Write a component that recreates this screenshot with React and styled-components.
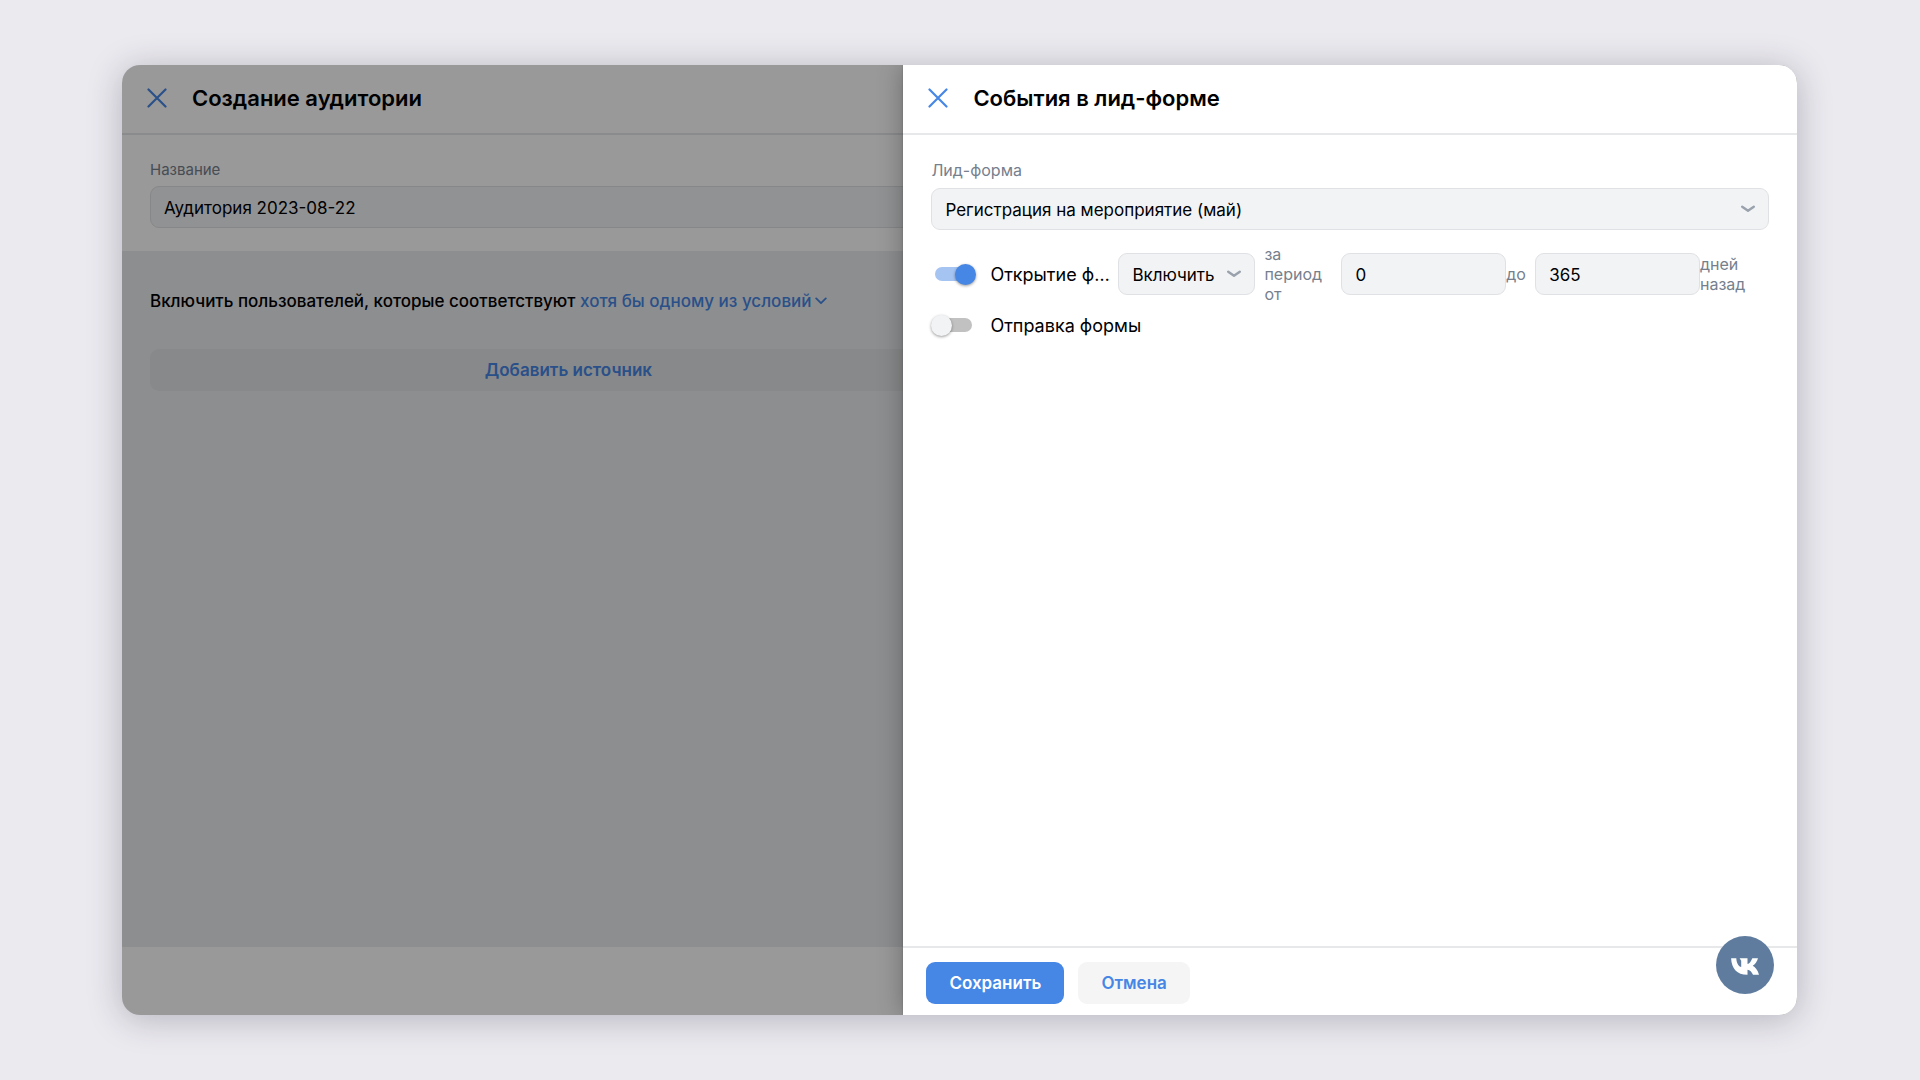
import { useState } from "react";
import styled, { createGlobalStyle } from "styled-components";

const FORMS = ["Регистрация на мероприятие (май)"];
const MODES = ["Включить", "Исключить"];

const CloseIcon = () => (
  <svg width="20" height="20" viewBox="0 0 20 20" fill="none">
    <path
      d="M1.5 1.5 18.5 18.5M18.5 1.5 1.5 18.5"
      stroke="currentColor"
      strokeWidth="2.2"
      strokeLinecap="round"
    />
  </svg>
);

const ChevronIcon = () => (
  <svg width="14" height="8" viewBox="0 0 14 8" fill="none">
    <path
      d="M1.2 1.7 7 5.8l5.8-4.1"
      stroke="currentColor"
      strokeWidth="2.4"
      strokeLinecap="round"
      strokeLinejoin="round"
    />
  </svg>
);

const SmallChevronIcon = () => (
  <svg width="12" height="8" viewBox="0 0 12 8" fill="none">
    <path
      d="M1.2 1.4 6 6.2l4.8-4.8"
      stroke="currentColor"
      strokeWidth="1.8"
      strokeLinecap="round"
      strokeLinejoin="round"
    />
  </svg>
);

const VkIcon = () => (
  <svg width="28" height="17" viewBox="0 0 28 17" fill="#ffffff">
    <path d="M16.200 16.800C6 16.800.6 10.500.1.200h5.200c.3 5.600 2.600 8.200 4.900 8.900V2.800L8.600.200h7.900v5.900C18.400 5.600 20.200 3.200 21.300.200h5.700c-.8 3.200-3 6-5.300 7.600 2.400 1.300 5.200 4.400 6.300 9h-6c-1.100-2.900-3.100-4.700-5.500-5.100v5.100z" />
  </svg>
);

const SelectField = ({ options, ...props }) => (
  <SelectBox>
    <Select {...props}>
      {options.map((option) => (
        <option key={option}>{option}</option>
      ))}
    </Select>
    <ChevronIcon />
  </SelectBox>
);

export default function App() {
  const [name, setName] = useState("Аудитория 2023-08-22");
  const [opened, setOpened] = useState(true);
  const [sent, setSent] = useState(false);
  const [from, setFrom] = useState("0");
  const [to, setTo] = useState("365");

  return (
    <Page>
      <GlobalStyle />
      <Window>
        <Panel>
          <Header>
            <CloseBtn aria-label="Закрыть">
              <CloseIcon />
            </CloseBtn>
            <Title>Создание аудитории</Title>
          </Header>
          <NameSection>
            <Label className="small" htmlFor="name">
              Название
            </Label>
            <Input
              id="name"
              value={name}
              onChange={(e) => setName(e.currentTarget.value)}
            />
          </NameSection>
          <SourceSection>
            <Condition>
              Включить пользователей, которые соответствуют{" "}
              <ConditionBtn>
                хотя бы одному из условий
                <SmallChevronIcon />
              </ConditionBtn>
            </Condition>
            <AddBtn>Добавить источник</AddBtn>
          </SourceSection>
          <PanelFooter />
        </Panel>
        <Overlay />
        <Drawer>
          <Header>
            <CloseBtn aria-label="Закрыть">
              <CloseIcon />
            </CloseBtn>
            <Title>События в лид-форме</Title>
          </Header>
          <Content>
            <FormField>
              <Label htmlFor="form">Лид-форма</Label>
              <SelectField id="form" options={FORMS} />
            </FormField>
            <EventRow>
              <Switch
                type="checkbox"
                id="opened"
                checked={opened}
                onChange={(e) => setOpened(e.currentTarget.checked)}
              />
              <EventName className="short" htmlFor="opened">
                Открытие формы
              </EventName>
              {opened && (
                <>
                  <ModeField>
                    <SelectField aria-label="Условие" options={MODES} />
                  </ModeField>
                  <Hint className="period" htmlFor="from">
                    за период от
                  </Hint>
                  <Days
                    id="from"
                    value={from}
                    onChange={(e) => setFrom(e.currentTarget.value)}
                  />
                  <Hint className="to" htmlFor="to">
                    до
                  </Hint>
                  <Days
                    id="to"
                    value={to}
                    onChange={(e) => setTo(e.currentTarget.value)}
                  />
                  <Hint className="ago" htmlFor="to">
                    дней назад
                  </Hint>
                </>
              )}
            </EventRow>
            <EventRow>
              <Switch
                type="checkbox"
                id="sent"
                checked={sent}
                onChange={(e) => setSent(e.currentTarget.checked)}
              />
              <EventName htmlFor="sent">Отправка формы</EventName>
            </EventRow>
          </Content>
          <Footer>
            <Btn className="primary">Сохранить</Btn>
            <Btn>Отмена</Btn>
          </Footer>
        </Drawer>
        <VkBtn aria-label="VK">
          <VkIcon />
        </VkBtn>
      </Window>
    </Page>
  );
}

const GlobalStyle = createGlobalStyle`
  * {
    box-sizing: border-box;
  }
  body {
    margin: 0;
    background-color: #ebeaef;
    color: #000000;
    font-family: Inter, "Noto Sans", sans-serif;
    font-size: 17px;
  }
  button, input, select {
    font: inherit;
    color: inherit;
  }
  button {
    padding: 0;
    border: none;
    background: none;
    cursor: pointer;
  }
`;

const Page = styled.div`
  display: flex;
  min-height: 100vh;
  padding: 65px 123px 65px 122px;
`;

const Window = styled.div`
  position: relative;
  display: flex;
  flex: 1;
  border-radius: 18px;
  overflow: hidden;
  background-color: #ffffff;
  box-shadow: 0 4px 34px rgba(40, 36, 60, 0.28);
`;

const Panel = styled.section`
  display: flex;
  flex-direction: column;
  width: 53.3%;
`;

const Overlay = styled.div`
  position: absolute;
  inset: 0;
  background-color: rgba(0, 0, 0, 0.4);
`;

const Drawer = styled.section`
  position: absolute;
  top: 0;
  right: 0;
  bottom: 0;
  display: flex;
  flex-direction: column;
  width: 53.35%;
  background-color: #ffffff;
  box-shadow: 0 0 24px rgba(0, 0, 0, 0.3), 0 0 2px rgba(0, 0, 0, 0.2);
`;

const Header = styled.header`
  display: flex;
  align-items: center;
  gap: 25px;
  height: 70px;
  padding: 0 25px 2px;
  border-bottom: 2px solid #e7e8ea;
`;

const CloseBtn = styled.button`
  display: flex;
  color: #4686e4;
`;

const Title = styled.h1`
  margin: 0;
  font-size: 22px;
  font-weight: 600;
`;

const NameSection = styled.div`
  display: flex;
  flex-direction: column;
  gap: 6px;
  padding: 25px 28px 23px;
`;

const Label = styled.label`
  font-size: 16px;
  line-height: 20px;
  color: #76808d;
  &.small {
    font-size: 15px;
  }
`;

const Input = styled.input`
  width: 100%;
  height: 42px;
  padding: 2px 13px 0;
  border: 1px solid #e0e1e4;
  border-radius: 9px;
  outline: none;
  background-color: #f2f3f5;
`;

const SourceSection = styled.div`
  display: flex;
  flex: 1;
  flex-direction: column;
  gap: 36px;
  padding: 38px 28px;
  background-color: #ebedf0;
`;

const Condition = styled.div`
  line-height: 24px;
  font-weight: 500;
`;

const ConditionBtn = styled.button`
  display: inline-flex;
  align-items: center;
  gap: 3px;
  color: #4686e4;
`;

const AddBtn = styled.button`
  height: 42px;
  border-radius: 9px;
  background-color: #e3e4e6;
  color: #4686e4;
  font-weight: 600;
`;

const PanelFooter = styled.footer`
  height: 68px;
`;

const Content = styled.div`
  flex: 1;
  padding: 25px 28px;
`;

const FormField = styled.div`
  display: flex;
  flex-direction: column;
  gap: 8px;
  margin-bottom: 14px;
`;

const SelectBox = styled.div`
  display: grid;
  align-items: center;
  color: #99a2ad;
  & > * {
    grid-area: 1 / 1;
  }
  & > svg {
    justify-self: end;
    margin-right: 14px;
    pointer-events: none;
  }
`;

const Select = styled.select`
  appearance: none;
  width: 100%;
  height: 42px;
  padding: 2px 36px 0 13px;
  border: 1px solid #e0e1e4;
  border-radius: 9px;
  outline: none;
  background-color: #f2f3f5;
  color: #000000;
`;

const EventRow = styled.div`
  display: flex;
  align-items: center;
  min-height: 42px;
`;

const Switch = styled.input`
  appearance: none;
  display: grid;
  align-items: center;
  flex: none;
  width: 45px;
  height: 22px;
  margin: 0 14px 0 0;
  cursor: pointer;
  &::before,
  &::after {
    content: "";
    grid-area: 1 / 1;
  }
  &::before {
    height: 14px;
    margin: 0 4px;
    border-radius: 7px;
    background-color: #c1c1c1;
  }
  &::after {
    width: 21px;
    height: 21px;
    border-radius: 50%;
    background-color: #f2f3f5;
    box-shadow: 0 1px 3px rgba(0, 0, 0, 0.4);
  }
  &:checked::before {
    background-color: #a5c4f2;
  }
  &:checked::after {
    justify-self: end;
    background-color: #4686e4;
  }
`;

const EventName = styled.label`
  overflow: hidden;
  padding-top: 2px;
  white-space: nowrap;
  text-overflow: ellipsis;
  font-size: 18px;
  line-height: 24px;
  &.short {
    flex: none;
    width: 122px;
    margin-right: 6px;
  }
`;

const ModeField = styled.div`
  flex: none;
  width: 137px;
`;

const Hint = styled.label`
  flex: none;
  font-size: 16px;
  line-height: 20px;
  color: #76808d;
  &.period {
    width: 77px;
    margin-left: 9px;
  }
  &.to {
    width: 29px;
  }
  &.ago {
    width: 69px;
  }
`;

const Days = styled(Input)`
  flex: 1;
  min-width: 0;
`;

const Footer = styled.footer`
  display: flex;
  gap: 14px;
  padding: 14px 23px 11px;
  border-top: 2px solid #e7e8ea;
`;

const Btn = styled.button`
  height: 42px;
  padding: 0 23px;
  border-radius: 9px;
  background-color: #f5f5f5;
  color: #4686e4;
  font-weight: 600;
  &.primary {
    background-color: #4686e4;
    color: #ffffff;
  }
`;

const VkBtn = styled.button`
  position: absolute;
  right: 23px;
  bottom: 21px;
  display: flex;
  align-items: center;
  justify-content: center;
  width: 58px;
  height: 58px;
  padding-top: 2px;
  border-radius: 50%;
  background-color: #5f7c9f;
`;
